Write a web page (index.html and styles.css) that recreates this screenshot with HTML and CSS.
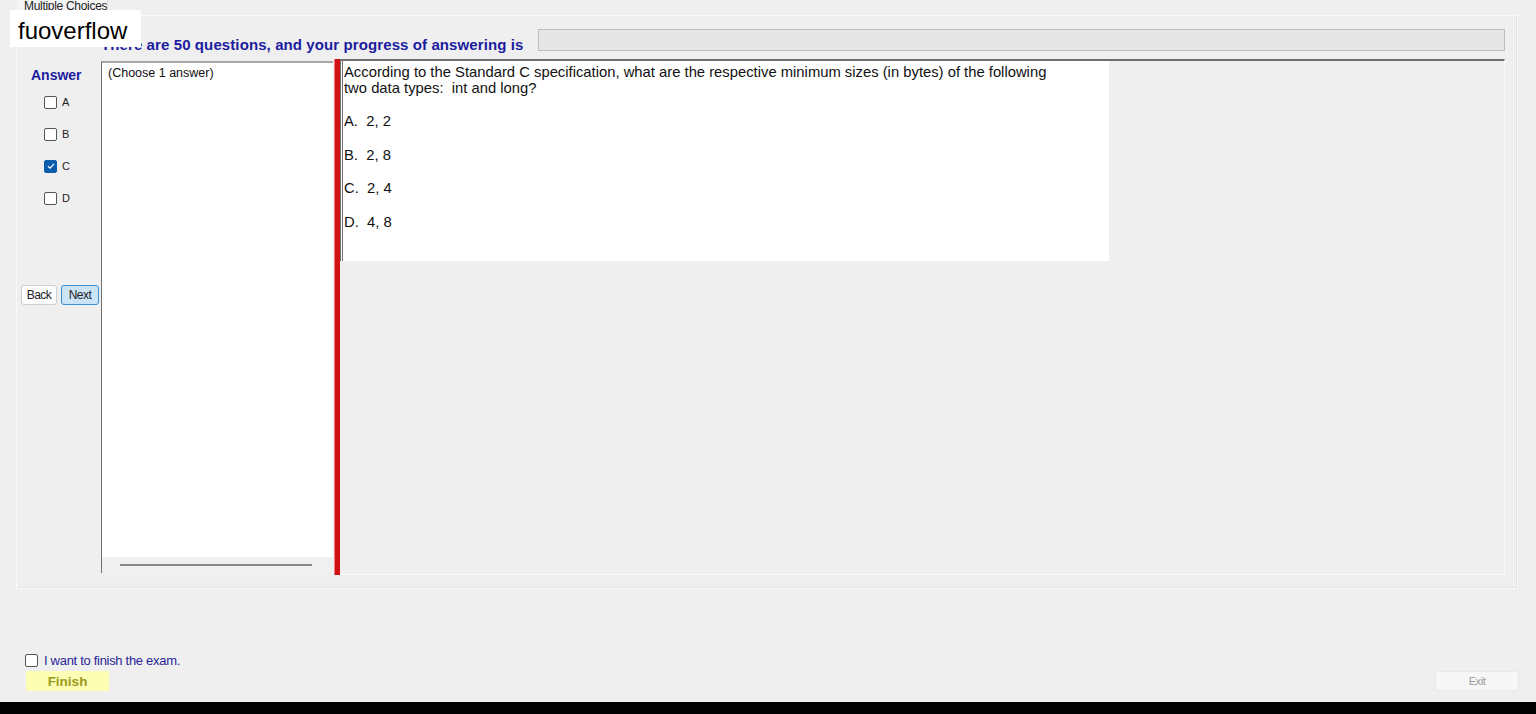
FILE: index.html
```html
<!DOCTYPE html>
<html lang="en">
<head>
    <meta charset="UTF-8">
    <title>Multiple Choices</title>
    <link rel="stylesheet" href="styles.css">
</head>
<body>

    <div class="watermark">fuoverflow</div>

    <div class="tab">Multiple Choices</div>

    <div class="panel">
        <div class="header">
            <div class="header-text">There are 50 questions, and your progress of answering is</div>
            <div class="progress"></div>
        </div>

        <div class="main">
            <div class="answer-col">
                <div class="answer-title">Answer</div>
                <label class="opt"><span class="box"></span>A</label>
                <label class="opt"><span class="box"></span>B</label>
                <label class="opt"><span class="box checked">
                    <svg width="10" height="10" viewBox="0 0 10 10"><path d="M2 5.2 L4.1 7.2 L8 2.8" fill="none" stroke="#fff" stroke-width="1.2"/></svg>
                </span>C</label>
                <label class="opt"><span class="box"></span>D</label>
                <div class="nav">
                    <button class="btn">Back</button>
                    <button class="btn btn-next">Next</button>
                </div>
            </div>

            <div class="listbox">
                <div class="listbox-text">(Choose 1 answer)</div>
                <div class="hscroll"><div class="hthumb"></div></div>
            </div>

            <div class="splitter"></div>

            <div class="question-pane">
                <div class="question">
                    <p class="q-text">According to the Standard C specification, what are the respective minimum sizes (in bytes) of the following<br>two data types:&nbsp; int and long?</p>
                    <p class="choice">A.&nbsp; 2, 2</p>
                    <p class="choice">B.&nbsp; 2, 8</p>
                    <p class="choice">C.&nbsp; 2, 4</p>
                    <p class="choice">D.&nbsp; 4, 8</p>
                </div>
            </div>
        </div>
    </div>

    <div class="footer">
        <div class="finish-col">
            <label class="finish-check"><span class="box"></span>I want to finish the exam.</label>
            <button class="finish-btn">Finish</button>
        </div>
        <button class="exit-btn">Exit</button>
    </div>

    <div class="taskbar"></div>

</body>
</html>
```

FILE: styles.css
```css
body {
    margin: 0;
    height: 714px;
    overflow: hidden;
    background-color: #efefef;
    font-family: "Liberation Sans", Arial, sans-serif;
    position: relative;
}
.watermark {
    position: absolute;
    left: 10px;
    top: 10px;
    width: 131px;
    height: 37px;
    background: #fff;
    color: #000;
    font-size: 24px;
    line-height: 42px;
    padding-left: 8px;
    box-sizing: border-box;
    z-index: 2;
}
.tab {
    margin-left: 17px;
    width: 91px;
    height: 15px;
    border-right: 1px solid #dadada;
    background: #f4f4f4;
    box-sizing: border-box;
    font-size: 12px;
    line-height: 13px;
    letter-spacing: -0.3px;
    color: #222;
    padding-left: 7px;
    overflow: hidden;
    white-space: nowrap;
}
.panel {
    margin: 0 18px 0 16px;
    height: 574px;
    border: 1px solid #fafafa;
    box-shadow: inset -1px -1px 0 #e2e2e2;
    box-sizing: border-box;
    padding: 13px 12px 0 0;
}
.header {
    display: flex;
    align-items: center;
    height: 22px;
}
.header-text {
    margin-left: 84px;
    width: 422px;
    flex-shrink: 0;
    font-size: 15px;
    font-weight: bold;
    letter-spacing: 0.1px;
    color: #1c1ca0;
    padding-top: 8px;
    white-space: nowrap;
}
.progress {
    margin-left: 15px;
    flex: 1;
    height: 22px;
    box-sizing: border-box;
    background: #e6e6e6;
    border: 1px solid #bcbcbc;
}
.main {
    display: flex;
    margin-top: 8px;
    height: 516px;
}
.answer-col {
    width: 84px;
    flex-shrink: 0;
    padding-left: 14px;
    box-sizing: border-box;
}
.answer-title {
    margin-top: 8px;
    font-size: 14px;
    font-weight: bold;
    color: #1c1ca0;
    height: 19px;
}
.opt {
    display: flex;
    align-items: center;
    height: 32px;
    margin-left: 13px;
    font-size: 11px;
    color: #222;
}
.box {
    display: inline-flex;
    align-items: center;
    justify-content: center;
    width: 11px;
    height: 11px;
    border: 1px solid #555;
    border-radius: 2px;
    background: #fff;
    margin-right: 5px;
    flex-shrink: 0;
}
.box.checked {
    background: #0b5cad;
    border-color: #0b5cad;
}
.nav {
    display: flex;
    gap: 4px;
    margin-top: 71px;
    margin-left: -10px;
}
.btn {
    height: 20px;
    padding: 0 4px;
    font-family: "Liberation Sans", Arial, sans-serif;
    font-size: 12px;
    letter-spacing: -0.5px;
    color: #222;
    background: #fdfdfd;
    border: 1px solid #cfcfcf;
    border-radius: 3px;
}
.btn:first-child {
    width: 36px;
}
.btn-next {
    width: 38px;
    background: #cce4f7;
    border-color: #3c8fd0;
}
.listbox {
    width: 232px;
    flex-shrink: 0;
    background: #fff;
    border-left: 1px solid #6f6f6f;
    border-top: 2px solid #a8a8a8;
    box-sizing: border-box;
    display: flex;
    flex-direction: column;
    justify-content: space-between;
    margin: 2px 0;
}
.listbox-text {
    font-size: 12.5px;
    color: #111;
    padding: 3px 0 0 6px;
}
.hscroll {
    height: 16px;
    background: #f0f0f0;
    display: flex;
    align-items: center;
    padding-left: 18px;
}
.hthumb {
    width: 192px;
    height: 2px;
    background: #888;
}
.splitter {
    width: 6px;
    flex-shrink: 0;
    margin-left: 1px;
    background: #cf1212;
    border-left: 1px solid #f08080;
    box-sizing: border-box;
}
.question-pane {
    flex: 1;
    border-top: 2px solid #707070;
    border-right: 1px solid #fafafa;
    border-bottom: 1px solid #fafafa;
}
.question {
    width: 769px;
    height: 200px;
    background: #fff;
    border-left: 3px double #6f6f6f;
    box-sizing: border-box;
    padding: 3px 0 0 1px;
    font-size: 14.8px;
    color: #111;
}
.q-text {
    margin: 0 0 17px;
    line-height: 16px;
}
.choice {
    margin: 0;
    line-height: 16px;
    height: 33.5px;
}
.footer {
    display: flex;
    justify-content: space-between;
    align-items: flex-end;
    margin: 64px 17px 0 25px;
}
.finish-col {
    display: flex;
    flex-direction: column;
    gap: 3px;
}
.finish-check {
    display: flex;
    align-items: center;
    font-size: 13px;
    letter-spacing: -0.3px;
    color: #2a1f98;
}
.finish-check .box {
    width: 11px;
    height: 11px;
    margin-right: 6px;
}
.finish-btn {
    margin-left: 1px;
    width: 83px;
    height: 20px;
    border: none;
    background: #fdfdb3;
    color: #9a9a22;
    font-family: "Liberation Sans", Arial, sans-serif;
    font-size: 13.5px;
    font-weight: bold;
}
.exit-btn {
    width: 84px;
    height: 20px;
    border: 1px solid #e8e8e8;
    border-radius: 3px;
    background: #f7f7f7;
    color: #9a9a9a;
    font-family: "Liberation Sans", Arial, sans-serif;
    font-size: 11px;
    letter-spacing: -0.4px;
}
.taskbar {
    position: absolute;
    left: 0;
    bottom: 0;
    width: 100%;
    height: 12px;
    background: #000;
}
```
